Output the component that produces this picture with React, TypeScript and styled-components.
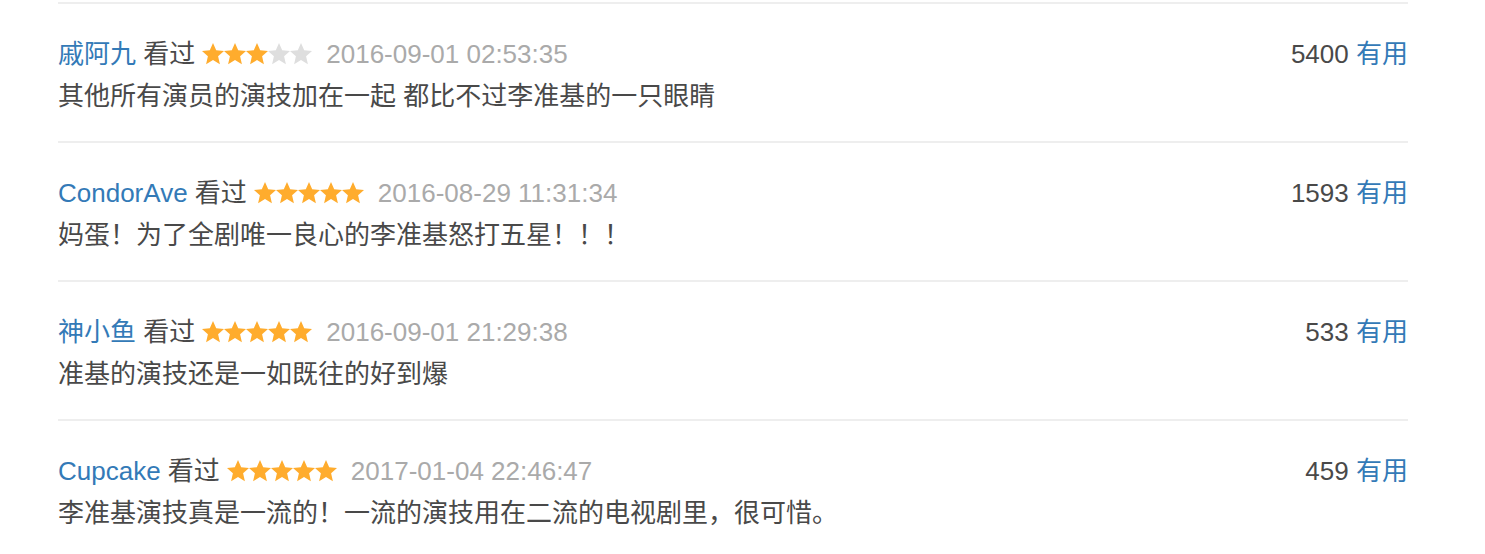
import React from 'react';
import styled, { createGlobalStyle } from 'styled-components';

const GlobalStyle = createGlobalStyle`
  html, body {
    margin: 0;
    padding: 0;
    background: #fff;
  }
  body {
    font-family: "Liberation Sans", Arial, "Noto Sans CJK SC", sans-serif;
    font-size: 26px;
    color: #494949;
  }
`;

const List = styled.ul`
  list-style: none;
  margin: 0;
  padding: 2px 0 0 58px;
  width: 1350px;
`;

const Item = styled.li`
  border-top: 2px solid #eee;
  padding: 29px 0 24px;
`;

const Head = styled.div`
  align-items: baseline;
  display: flex;
  height: 42px;
  justify-content: space-between;
  line-height: 42px;
`;

const Meta = styled.div`
  align-items: center;
  display: flex;
  white-space: pre;
`;

const Name = styled.a`
  color: #337ab7;
  text-decoration: none;
`;

const Seen = styled.span`
  color: #494949;
  margin-right: 7px;
`;

const Stars = styled.span`
  display: inline-flex;
  margin-right: 14px;
`;

const Date = styled.span`
  color: #aaa;
`;

const Votes = styled.div`
  color: #494949;
  line-height: 42px;
`;

const Useful = styled.a`
  color: #337ab7;
  text-decoration: none;
`;

const Body = styled.p`
  line-height: 42px;
  margin: 0;
`;

interface StarProps {
  on: boolean;
}

function Star({ on }: StarProps) {
  return (
    <svg width="22" height="22" viewBox="1 1 22 22">
      <polygon
        points="12,1 15.2,8.3 23,9 17.1,14.3 18.9,22.2 12,18.1 5.1,22.2 6.9,14.3 1,9 8.8,8.3"
        fill={on ? '#ffac2d' : '#dedede'}
      />
    </svg>
  );
}

interface Comment {
  name: string;
  rating: number;
  date: string;
  votes: number;
  text: string;
}

const comments: Comment[] = [
  { name: '戚阿九', rating: 3, date: '2016-09-01 02:53:35', votes: 5400, text: '其他所有演员的演技加在一起 都比不过李准基的一只眼睛' },
  { name: 'CondorAve', rating: 5, date: '2016-08-29 11:31:34', votes: 1593, text: '妈蛋！为了全剧唯一良心的李准基怒打五星！！！' },
  { name: '神小鱼', rating: 5, date: '2016-09-01 21:29:38', votes: 533, text: '准基的演技还是一如既往的好到爆' },
  { name: 'Cupcake', rating: 5, date: '2017-01-04 22:46:47', votes: 459, text: '李准基演技真是一流的！一流的演技用在二流的电视剧里，很可惜。' },
];

export default function App() {
  return (
    <>
      <GlobalStyle />
      <List>
        {comments.map((c) => (
          <Item key={c.name}>
            <Head>
              <Meta>
                <Name href="#">{c.name}</Name>
                <Seen> 看过</Seen>
                <Stars>
                  {[1, 2, 3, 4, 5].map((i) => (
                    <Star key={i} on={i <= c.rating} />
                  ))}
                </Stars>
                <Date>{c.date}</Date>
              </Meta>
              <Votes>
                {c.votes} <Useful href="#">有用</Useful>
              </Votes>
            </Head>
            <Body>{c.text}</Body>
          </Item>
        ))}
      </List>
    </>
  );
}
